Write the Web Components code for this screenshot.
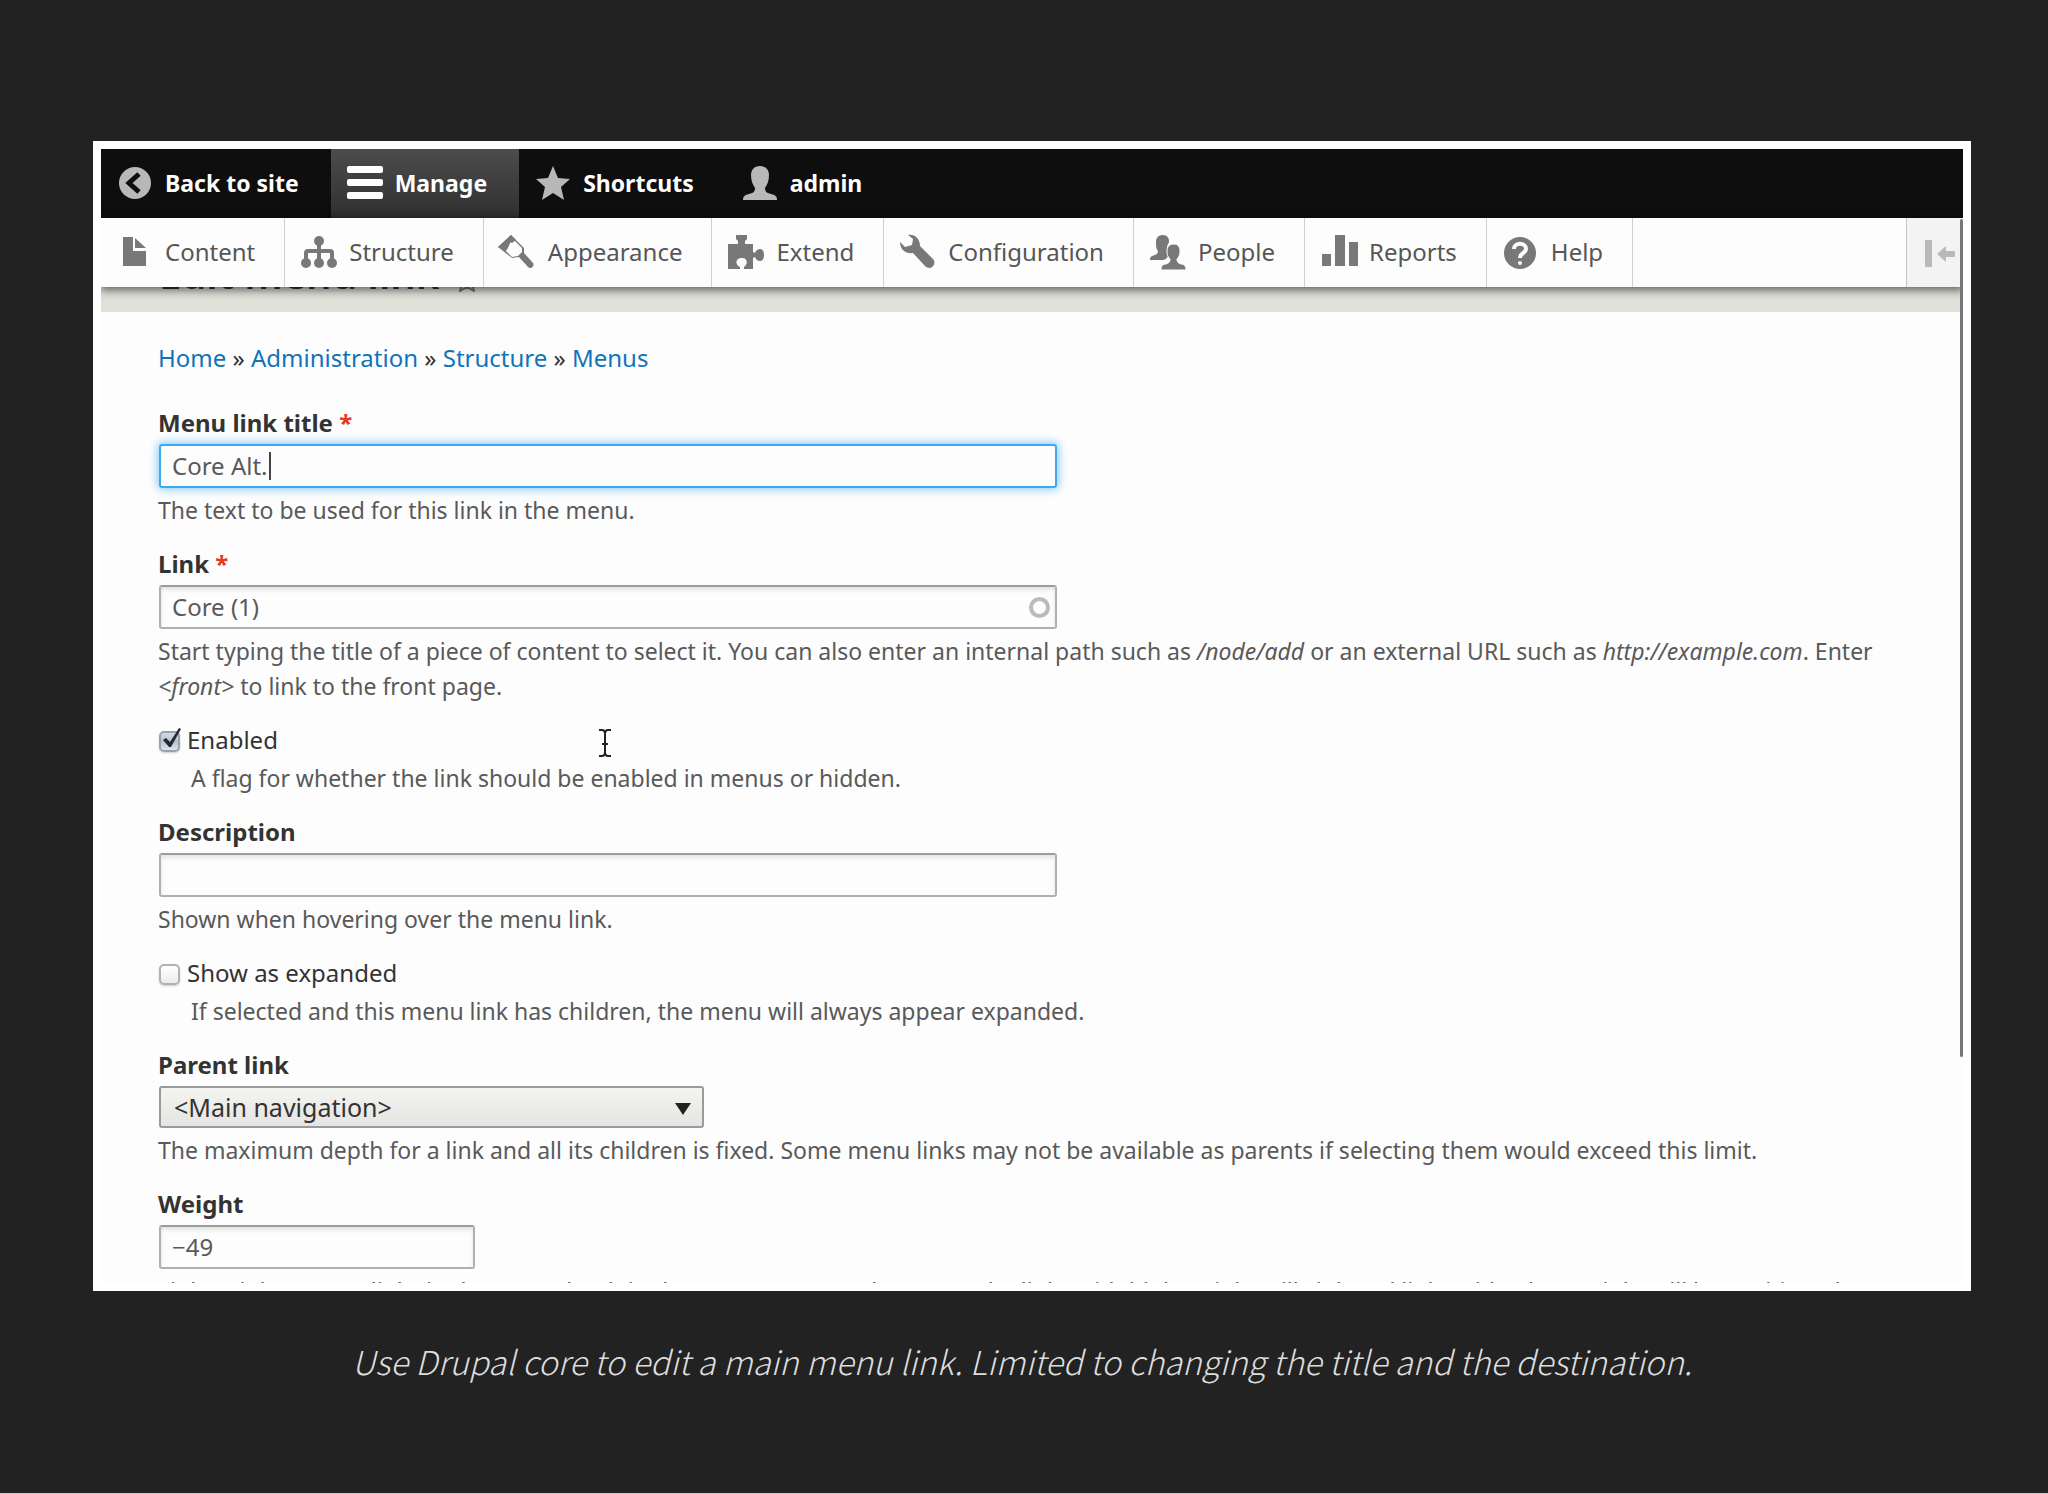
<!DOCTYPE html>
<html lang="en">
<head>
<meta charset="utf-8">
<title>Edit menu link</title>
<style>
  body {
    display: flex;
    flex-direction: column;
    box-sizing: border-box;
    margin: 0;
    min-height: 100vh;
    border-bottom: 1px solid #c9c9c9;
    background: #222222;
    font-family: "Noto Sans", "Open Sans", sans-serif;
    font-size: 23px;
    color: #333333;
  }
</style>
</head>
<body>
<demo-slide>
  <admin-screen>
    <admin-bar slot="bar">
      <bar-item icon="back">Back to site</bar-item>
      <bar-item icon="manage" active>Manage</bar-item>
      <bar-item icon="star">Shortcuts</bar-item>
      <bar-item icon="user">admin</bar-item>
    </admin-bar>
    <admin-tray slot="tray">
      <tray-item icon="content">Content</tray-item>
      <tray-item icon="structure">Structure</tray-item>
      <tray-item icon="appearance">Appearance</tray-item>
      <tray-item icon="extend">Extend</tray-item>
      <tray-item icon="configuration">Configuration</tray-item>
      <tray-item icon="people">People</tray-item>
      <tray-item icon="reports">Reports</tray-item>
      <tray-item icon="help">Help</tray-item>
    </admin-tray>
    <page-title slot="title">Edit menu link</page-title>
    <bread-crumb slot="crumbs" trail="Home,Administration,Structure,Menus"></bread-crumb>

    <form-field label="Menu link title" value="Core Alt." required active>The text to be used for this link in the menu.</form-field>
    <form-field label="Link" value="Core (1)" required autocomplete>Start typing the title of a piece of content to select it. You can also enter an internal path such as <em>/node/add</em> or an external URL such as <em>http://example.com</em>. Enter <em>&lt;front&gt;</em> to link to the front page.</form-field>
    <check-field label="Enabled" checked>A flag for whether the link should be enabled in menus or hidden.</check-field>
    <form-field label="Description">Shown when hovering over the menu link.</form-field>
    <check-field label="Show as expanded">If selected and this menu link has children, the menu will always appear expanded.</check-field>
    <form-field type="select" label="Parent link" value="&lt;Main navigation&gt;">The maximum depth for a link and all its children is fixed. Some menu links may not be available as parents if selecting them would exceed this limit.</form-field>
    <form-field label="Weight" value="−49" narrow>Link weight among links in the same depth in the same menu. In the menu, the links with high weight will sink and links with a low weight will be positioned nearer the top.</form-field>
  </admin-screen>
  <span slot="caption">Use Drupal core to edit a main menu link. Limited to changing the title and the destination.</span>
</demo-slide>

<script>
// Every icon is drawn on a 36x36 grid.
const ICONS = {
  back: `<circle cx="18" cy="18" r="16"/><path d="M22 9l-10 9 10 9" fill="none" stroke="#0e0e0e" stroke-width="5"/>`,
  manage: `<rect y="1" width="36" height="7" rx="2"/><rect y="14" width="36" height="7" rx="2"/><rect y="27" width="36" height="7" rx="2"/>`,
  star: `<path d="M18 1l5 12 12 1-9 8 3 13-11-7-11 7 3-13-9-8 12-1z"/>`,
  user: `<path d="M18 1c6 0 9 4 9 9 0 6-2 10-4 13 0 4 2 5 6 6 4 1 6 2 6 6H1c0-4 2-5 6-6s6-2 6-6C11 20 9 16 9 10c0-5 3-9 9-9z"/>`,
  content: `<path d="M6 3h10v14h13v15H6z"/><path d="M18 4l11 10H18z"/>`,
  structure: `<circle cx="18" cy="7" r="5"/><circle cx="5" cy="29" r="5"/><circle cx="18" cy="29" r="5"/><circle cx="31" cy="29" r="5"/><path d="M18 7v22M5 29V19q0-2 2-2h22q2 0 2 2v10" fill="none" stroke="currentColor" stroke-width="4"/>`,
  appearance: `<path d="M-2 13L11 1l13 13v5l9 10c2 3-2 7-5 4l-9-10-7 1z"/><path d="M8 12l5-7 9 9v4l-4 4-6 1-9-9 2-2z" fill="#fdfdfd"/><path d="M-2 13L11 1l5 5-4 3-2-1-1 4-3 5z"/>`,
  extend: `<path d="M0 10h10V7L8 5V1h11v4l-2 2v3h8v8l2 1c1-3 3-4 5-4 3 0 4 3 4 6s-1 6-4 6c-2 0-4-1-5-4l-2 1v11h-9v-2c4-2 4-9-2-9-7 0-7 7-2 9v2H0z"/>`,
  configuration: `<path d="M8 1c7-1 12 4 12 11l13 13c3 3 1 8-3 9-2 0-4-1-5-2L13 19C6 20 0 16 0 8l5 5 7-2 1-6z"/>`,
  people: `<path d="M13 1c4 0 6 3 6 6 0 1 0 2-1 3-2 3-1 8 1 11l-3 4-3 1H0c0-4 2-4 5-5 2-1 3-2 3-4-2-2-2-5-2-9 0-4 2-7 7-7z"/><path d="M24 10c4 0 6 3 6 7s-1 6-3 8c0 3 1 4 4 5 3 0 5 2 5 6H11c0-4 2-6 5-6 3-1 4-2 4-5-2-2-3-4-3-8s2-7 7-7z" stroke="#fdfdfd"/>`,
  reports: `<path d="M1 20h9v12H1zM14 1h10v31H14zM28 8h9v24h-9z"/>`,
  help: `<circle cx="17" cy="19" r="16"/><path d="M11 15c0-7 12-7 12 0 0 4-6 4-6 9" fill="none" stroke="#fdfdfd" stroke-width="4"/><circle cx="17" cy="29" r="2" fill="#fdfdfd"/>`,
  rotate: `<path d="M6 5h7v27H6zM18 19l9-8v5h9v6h-9v5z"/>`,
};

function define(name, render) {
  customElements.define(name, class extends HTMLElement {
    connectedCallback() {
      if (this.shadowRoot) return;
      this.attachShadow({ mode: "open" }).innerHTML = render(this);
    }
  });
}

define("ui-icon", (el) => `
  <style>
    :host { display: block; flex: none; width: 36px; height: 36px; }
    svg { display: block; overflow: visible; fill: currentColor; }
  </style>
  <svg width="36" height="36" viewBox="0 0 36 36" aria-hidden="true">${ICONS[el.getAttribute("name")]}</svg>
`);

define("demo-slide", () => `
  <style>
    :host { display: block; padding: 141px 77px 0 93px; }
    figure { margin: 0; }
    .frame { border: 8px solid #ffffff; }
    figcaption {
      margin-top: 43px;
      padding-right: 20px;
      text-align: center;
      font: italic 300 33px/54px "Noto Sans CJK JP", "Open Sans", sans-serif;
      color: #dddddd;
    }
  </style>
  <figure>
    <div class="frame"><slot></slot></div>
    <figcaption><slot name="caption"></slot></figcaption>
  </figure>
`);

define("admin-screen", () => `
  <style>
    :host {
      display: block;
      position: relative;
      height: 1134px;
      overflow: hidden;
      background: #fdfdfd;
    }
    main { padding: 30px 48px 0 57px; }
    form { display: flex; flex-direction: column; gap: 20px; margin-top: 33px; }
    .scrollbar {
      position: absolute;
      top: 70px;
      right: 0;
      width: 3px;
      height: 838px;
      border-radius: 2px;
      background: #77777a;
    }
    .pointer { position: absolute; left: 498px; top: 580px; }
  </style>
  <slot name="bar"></slot>
  <slot name="tray"></slot>
  <slot name="title"></slot>
  <main>
    <slot name="crumbs"></slot>
    <form><slot></slot></form>
  </main>
  <div class="scrollbar"></div>
  <svg class="pointer" width="12" height="28" viewBox="0 0 12 28" fill="none" stroke="#222222" stroke-width="2" aria-hidden="true">
    <path d="M0 1h3q3 0 3 4v18q0 4-3 4H0M12 1H9Q6 1 6 5v18q0 4 3 4h3M3 15h6"/>
  </svg>
`);

define("admin-bar", () => `
  <style>
    :host { display: block; background: #0e0e0e; color: #ffffff; }
    nav { display: flex; height: 69px; }
  </style>
  <nav aria-label="Toolbar"><slot></slot></nav>
`);

define("bar-item", (el) => `
  <style>
    :host { display: flex; }
    :host([active]) { background: linear-gradient(#4c4c4c, #303030); }
    a {
      display: flex;
      align-items: center;
      gap: 12px;
      padding: 0 32px 2px 16px;
      font-size: 23px;
      font-weight: 700;
      color: inherit;
      text-decoration: none;
    }
    ui-icon { color: #b8b8b8; }
    :host([active]) ui-icon { color: #ffffff; }
  </style>
  <a href="#"><ui-icon name="${el.getAttribute("icon")}"></ui-icon><slot></slot></a>
`);

define("admin-tray", () => `
  <style>
    :host {
      display: block;
      position: relative;
      background: #fdfdfd;
      box-shadow: 0 2px 9px 1px rgba(0, 0, 0, 0.6);
    }
    nav { display: flex; height: 69px; }
    button {
      display: flex;
      align-items: center;
      margin-left: auto;
      width: 57px;
      padding: 0 0 0 12px;
      border: 0;
      border-left: 1px solid #c6c6c6;
      background: #f3f3f3;
      color: #b9b9b9;
    }
  </style>
  <nav aria-label="Administration">
    <slot></slot>
    <button type="button" aria-label="Vertical orientation"><ui-icon name="rotate"></ui-icon></button>
  </nav>
`);

define("tray-item", (el) => `
  <style>
    :host { display: flex; border-right: 1px solid #d0d0d0; }
    a {
      display: flex;
      align-items: center;
      gap: 12px;
      padding: 0 29px 2px 16px;
      font-size: 24px;
      color: #565656;
      text-decoration: none;
    }
    ui-icon { color: #787878; }
  </style>
  <a href="#"><ui-icon name="${el.getAttribute("icon")}"></ui-icon><slot></slot></a>
`);

// The title is scrolled under the tray: only its lowest pixels show.
define("page-title", () => `
  <style>
    :host {
      display: flex;
      align-items: flex-end;
      gap: 16px;
      height: 25px;
      padding-left: 58px;
      overflow: hidden;
      background: #e0e1d8;
    }
    h1 { margin: 0; padding-bottom: 18px; font-size: 40px; line-height: 40px; font-weight: 600; }
    svg { margin-bottom: 20px; }
  </style>
  <h1><slot></slot></h1>
  <svg width="24" height="24" viewBox="0 0 24 24" fill="none" stroke="#777777" stroke-width="2" aria-hidden="true">
    <path d="M12 2l3 7 8 1-6 5 2 8-7-4-7 4 2-8-6-5 8-1z"/>
  </svg>
`);

define("bread-crumb", (el) => `
  <style>
    :host { display: block; font-size: 24px; line-height: 32px; }
    a { color: #0f74bb; text-decoration: none; }
  </style>
  <nav aria-label="Breadcrumb">${el.getAttribute("trail").split(",").map((t) => `<a href="#">${t}</a>`).join(" » ")}</nav>
`);

const FIELD_STYLE = `
  :host { display: block; }
  label { font-size: 24px; line-height: 32px; color: #333333; }
  .help { margin-top: 5px; line-height: 35px; color: #595959; }
`;

define("form-field", (el) => {
  const escape = (s) => (s || "").replace(/</g, "&lt;").replace(/>/g, "&gt;");
  const value = escape(el.getAttribute("value"));
  const control = el.getAttribute("type") === "select"
    ? `<select id="control"><option>${value}</option></select>
       <svg class="arrow" width="16" height="12" viewBox="0 0 16 12" aria-hidden="true"><path d="M0 0h16L8 12z" fill="#222222"/></svg>`
    : `<input id="control" type="text" value="${value}" aria-describedby="help">`;
  return `
    <style>
      ${FIELD_STYLE}
      label { display: block; font-weight: 700; }
      .required { color: #e8381f; }
      .control { position: relative; max-width: 898px; margin: 5px 0 0 1px; }
      :host([narrow]) .control { max-width: 316px; }
      :host([type="select"]) .control { max-width: 545px; }
      input, select {
        display: block;
        box-sizing: border-box;
        width: 100%;
        height: 44px;
        margin: 0;
        padding: 0 11px 2px;
        border: 2px solid #b0b0b0;
        border-top-color: #9c9c9c;
        border-radius: 3px;
        background: #fdfdfd;
        box-shadow: inset 0 3px 4px rgba(0, 0, 0, 0.1);
        font: inherit;
        font-size: 24px;
        color: #595959;
      }
      :host([active]) input {
        border-color: #40a9ee;
        box-shadow: 0 0 8px 2px #8fd0f9;
      }
      select {
        appearance: none;
        height: 42px;
        padding: 0 13px;
        border-color: #9a9a9a;
        background: linear-gradient(#f4f4f1, #e4e4e2);
        box-shadow: none;
        font-size: 25px;
        color: #333333;
      }
      .arrow { position: absolute; right: 13px; top: 17px; pointer-events: none; }
      .throbber {
        position: absolute;
        right: 7px;
        top: 12px;
        box-sizing: border-box;
        width: 21px;
        height: 21px;
        border: 4px solid #bbbbbb;
        border-radius: 50%;
      }
      .caret { position: absolute; left: 110px; top: 8px; width: 2px; height: 28px; background: #444444; }
    </style>
    <label for="control">${el.getAttribute("label")}${el.hasAttribute("required") ? ' <span class="required">*</span>' : ""}</label>
    <div class="control">
      ${control}
      ${el.hasAttribute("active") ? '<span class="caret"></span>' : ""}
      ${el.hasAttribute("autocomplete") ? '<span class="throbber"></span>' : ""}
    </div>
    <div class="help" id="help"><slot></slot></div>
  `;
});

define("check-field", (el) => `
  <style>
    ${FIELD_STYLE}
    .row { display: flex; align-items: center; gap: 7px; }
    .box { position: relative; height: 21px; margin: 2px 0 0 1px; }
    input {
      appearance: none;
      display: block;
      box-sizing: border-box;
      width: 21px;
      height: 21px;
      margin: 0;
      border: 2px solid #b2b2b2;
      border-radius: 5px;
      background: linear-gradient(#ffffff, #ececec);
      box-shadow: 0 1px 2px rgba(0, 0, 0, 0.2);
    }
    input:checked { border-color: #9aa2ac; background: linear-gradient(#d4dae2, #b9c2cc 50%, #dfe6ec); }
    svg { position: absolute; left: 2px; top: -4px; pointer-events: none; }
    .help { padding-left: 33px; }
  </style>
  <div class="row">
    <span class="box">
      <input id="control" type="checkbox" aria-describedby="help"${el.hasAttribute("checked") ? " checked" : ""}>
      ${el.hasAttribute("checked") ? '<svg width="22" height="22" viewBox="0 0 22 22" aria-hidden="true"><path d="M2 13l3-2 4 4L18 1l2 1L10 20H8z" fill="#232a38"/></svg>' : ""}
    </span>
    <label for="control">${el.getAttribute("label")}</label>
  </div>
  <div class="help" id="help"><slot></slot></div>
`);
</script>
</body>
</html>
